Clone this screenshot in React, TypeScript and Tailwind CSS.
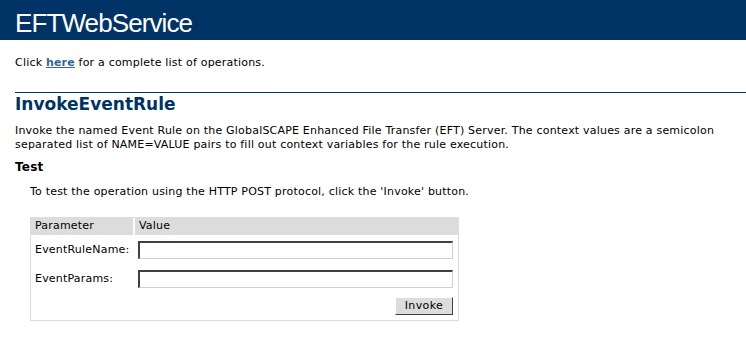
export default function App() {
  return (
    <div className="min-h-[338px] w-[746px] overflow-hidden bg-white text-black font-['DejaVu_Sans',Verdana,sans-serif]">
      {/* page heading */}
      <div className="h-[40px] bg-[#003366] pl-[15px] pt-[8px]">
        <div className="font-['Liberation_Sans',Tahoma,sans-serif] text-[26px] leading-[30px] tracking-[-0.9px] text-white">
          EFTWebService
        </div>
      </div>

      <div className="pl-[15px] text-[11px] tracking-[0.2px]">
        <p className="mt-[16px] leading-[14px]">
          Click{' '}
          <a href="#" className="font-bold text-[#336699] underline">
            here
          </a>{' '}
          for a complete list of operations.
        </p>

        <h2 className="mt-[22px] border-t border-[#003366] pt-[1px] text-[17px] font-bold leading-[20px] tracking-normal text-[#003366]">
          InvokeEventRule
        </h2>

        <p className="mt-[10px] leading-[14px]">
          Invoke the named Event Rule on the GlobalSCAPE Enhanced File Transfer (EFT) Server. The context values are a semicolon
          <br />
          separated list of NAME=VALUE pairs to fill out context variables for the rule execution.
        </p>

        <h3 className="mt-[8px] text-[12px] font-bold leading-[15px]">Test</h3>

        <p className="ml-[15px] mt-[10px] leading-[14px]">
          To test the operation using the HTTP POST protocol, click the 'Invoke' button.
        </p>

        {/* test form */}
        <div className="ml-[15px] mt-[18px] w-[429px] border border-[#dcdcdc]">
          <div className="flex h-[17px] items-center gap-[2px]">
            <div className="flex h-full w-[102px] items-center bg-[#dcdcdc] pl-[4px]">Parameter</div>
            <div className="flex h-full flex-1 items-center bg-[#dcdcdc] pl-[4px]">Value</div>
          </div>

          <div className="flex flex-col gap-[11px] pt-[6px]">
            {['EventRuleName:', 'EventParams:'].map((label) => (
              <div key={label} className="flex items-center">
                <div className="w-[107px] pl-[4px]">{label}</div>
                <input
                  type="text"
                  className="h-[18px] w-[315px] border-b border-l-2 border-r border-t-2 border-b-[#d4d0c8] border-l-[#404040] border-r-[#d4d0c8] border-t-[#404040] bg-white outline-none"
                />
              </div>
            ))}
          </div>

          <div className="flex justify-end pb-[5px] pr-[5px] pt-[9px]">
            <button className="h-[18px] w-[58px] border border-b-[#404040] border-l-white border-r-[#404040] border-t-white bg-[#dcdcdc] text-[11px] leading-[14px] tracking-[0.4px]">
              Invoke
            </button>
          </div>
        </div>
      </div>
    </div>
  );
}
